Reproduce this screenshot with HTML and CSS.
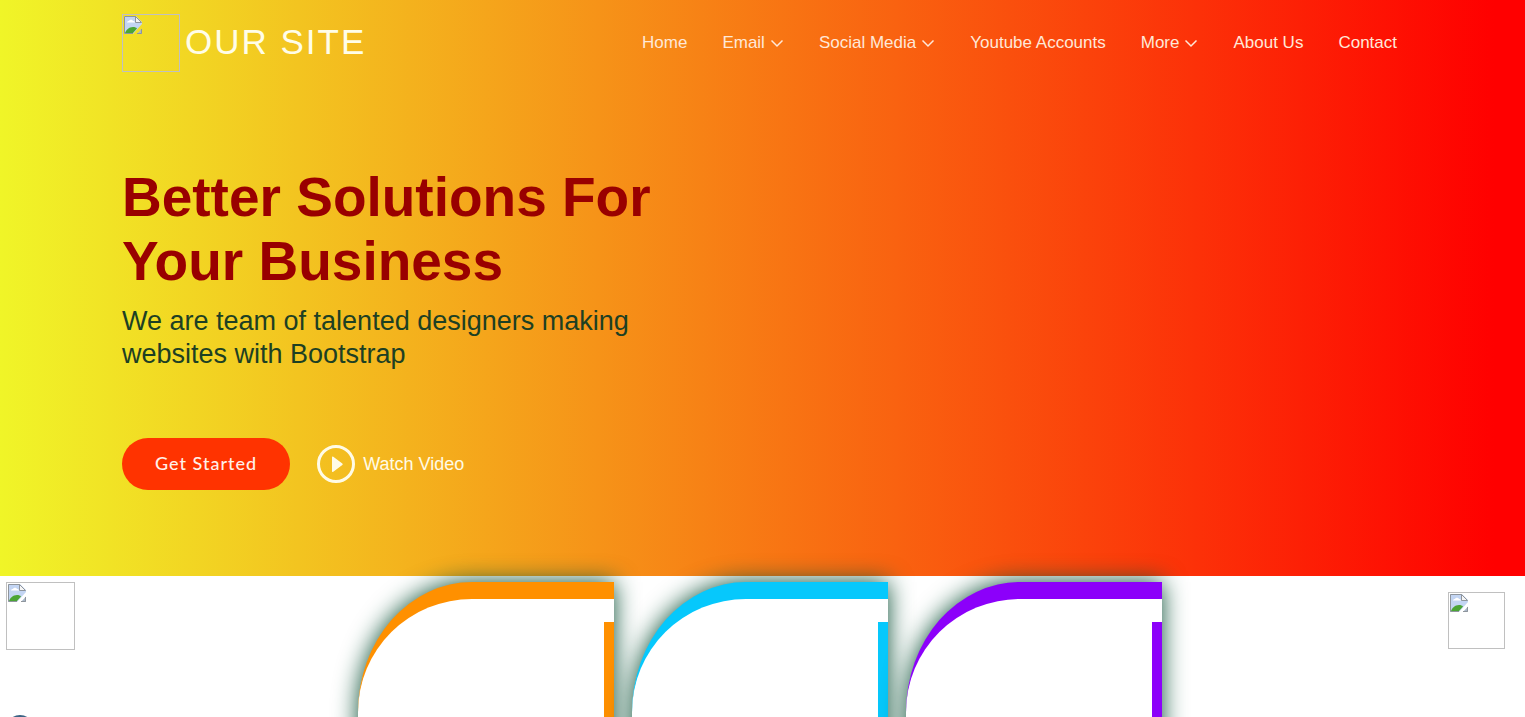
FILE: index.html
```html
<!DOCTYPE html>
<html lang="en">
<head>
<meta charset="utf-8">
<meta name="viewport" content="width=device-width, initial-scale=1">
<title>Our Site</title>
<link rel="stylesheet" href="styles.css">
</head>
<body>
<svg class="symbols" aria-hidden="true">
  <symbol id="missing" viewBox="0 0 18 18">
    <path d="M0 0h12l6 6v2l-9 10H0z" fill="#c3d5f3"/>
    <path d="M3 6.500c0-1 1-1.500 2-1.500.5-1.800 3.500-1.800 4 0 1 0 2 .5 2 1.500z" fill="#fff"/>
    <path d="M1 17c1-3 4-6 8-6 2 0 3 .5 4 1.500L9 17z" fill="#4ba535"/>
    <path d="M9 17.500H.5V.5H12" fill="none" stroke="#8f959c"/>
    <path d="M11.500.5v6h6z" fill="#f5f5f5" stroke="#8f959c"/>
    <path d="M18 12.500V18h-5z" fill="#a9b8c9"/>
    <path d="M17.500 13v4.500H13" fill="none" stroke="#8f959c"/>
  </symbol>
  <symbol id="chevron" viewBox="0 0 14 14">
    <path d="M1.500 4.500l5.500 5.500 5.500-5.500" fill="none" stroke="currentColor" stroke-width="1.500"/>
  </symbol>
</svg>

<header class="hero">
  <div class="topbar">
    <a class="brand" href="#">
      <span class="photo photo-logo"><svg class="missing"><use href="#missing"/></svg></span>
      <span class="brand-name">OUR SITE</span>
    </a>
    <nav class="nav">
      <a href="#">Home</a>
      <a href="#">Email <svg class="chevron"><use href="#chevron"/></svg></a>
      <a href="#">Social Media <svg class="chevron"><use href="#chevron"/></svg></a>
      <a href="#">Youtube Accounts</a>
      <a href="#">More <svg class="chevron"><use href="#chevron"/></svg></a>
      <a href="#">About Us</a>
      <a href="#">Contact</a>
    </nav>
  </div>
  <div class="intro">
    <h1>Better Solutions For Your Business</h1>
    <h2>We are team of talented designers making websites with Bootstrap</h2>
    <div class="actions">
      <a class="start" href="#">Get Started</a>
      <a class="watch" href="#">
        <svg class="play" viewBox="0 0 40 40" aria-hidden="true">
          <circle cx="20" cy="20" r="17.500" fill="none" stroke="currentColor" stroke-width="3"/>
          <path d="M16 13.500v13.500q0 1.500 1.300.7l9-6.700q1-.8 0-1.500l-9-6.700q-1.300-.8-1.300.7z" fill="currentColor"/>
        </svg>
        Watch Video
      </a>
    </div>
  </div>
</header>

<main class="features">
  <div class="side">
    <span class="photo photo-large"><svg class="missing"><use href="#missing"/></svg></span>
    <span class="dot"></span>
  </div>
  <div class="cards">
    <article class="card orange"><div class="card-body"></div></article>
    <article class="card blue"><div class="card-body"></div></article>
    <article class="card purple"><div class="card-body"></div></article>
  </div>
  <span class="photo photo-small"><svg class="missing"><use href="#missing"/></svg></span>
</main>
</body>
</html>
```
FILE: styles.css
```css
* {
  box-sizing: border-box;
}

body {
  margin: 0;
  height: 100vh;
  overflow: hidden;
  background: #fff;
  font-family: "Liberation Sans", Arial, sans-serif;
}

a {
  color: inherit;
  text-decoration: none;
}

.symbols {
  display: none;
}

.hero {
  padding: 14px 128px 86px 122px;
  background: linear-gradient(90deg, #f0f528, #f00 98%);
  color: #fffbe6;
}

.topbar {
  display: flex;
  justify-content: space-between;
  align-items: center;
}

.brand {
  display: flex;
  align-items: center;
  gap: 5px;
}

.brand-name {
  padding-bottom: 2px;
  font-size: 35px;
  line-height: 54px;
  letter-spacing: 2px;
  color: #fffde8;
}

.photo {
  display: block;
  flex: none;
  padding: 1px;
  border: 1px solid #c0c0c0;
}

.photo-logo {
  width: 58px;
  height: 58px;
}

.photo-large {
  width: 69px;
  height: 68px;
}

.photo-small {
  width: 57px;
  height: 57px;
  margin-top: 10px;
}

.missing {
  display: block;
  width: 18px;
  height: 18px;
}

.nav {
  display: flex;
  gap: 35px;
  font-size: 17px;
  color: #ffe8d8;
}

.nav a {
  display: flex;
  align-items: center;
  gap: 5px;
  white-space: nowrap;
}

.chevron {
  width: 14px;
  height: 14px;
}

.intro {
  max-width: 560px;
  padding-top: 93px;
}

h1 {
  margin: 0;
  font-size: 55px;
  line-height: 64px;
  color: #900;
}

h2 {
  margin: 12px 0 0;
  font-size: 27px;
  font-weight: 400;
  line-height: 33px;
  color: #1d4023;
}

.actions {
  display: flex;
  align-items: center;
  gap: 26px;
  margin-top: 67px;
}

.start {
  padding: 14px 33px 16px;
  border-radius: 26px;
  background: #ff3300;
  color: #fff0e8;
  font-family: Lato, sans-serif;
  font-size: 18px;
  font-weight: 500;
  line-height: 22px;
  letter-spacing: 1px;
}

.watch {
  display: flex;
  align-items: center;
  gap: 7px;
  font-size: 18px;
}

.play {
  width: 40px;
  height: 40px;
}

.features {
  display: flex;
  justify-content: space-between;
  align-items: flex-start;
  padding: 6px 20px 0 6px;
}

.side {
  display: flex;
  flex-direction: column;
  gap: 65px;
}

.dot {
  width: 28px;
  height: 28px;
  border-radius: 50%;
  background: #3b6384;
}

.cards {
  display: flex;
  gap: 18px;
  margin-right: 4px;
}

.card {
  width: 256px;
  padding: 23px 0 40px;
  border-top: 17px solid var(--accent);
  border-top-left-radius: 114px 130px;
  background: #fff;
  box-shadow: 0 0 25px #0b5036;
}

.card-body {
  height: 280px;
  border-right: 10px solid var(--accent);
}

.orange {
  --accent: #ff9000;
}

.blue {
  --accent: #06c8fc;
}

.purple {
  --accent: #8c00fa;
}
```
